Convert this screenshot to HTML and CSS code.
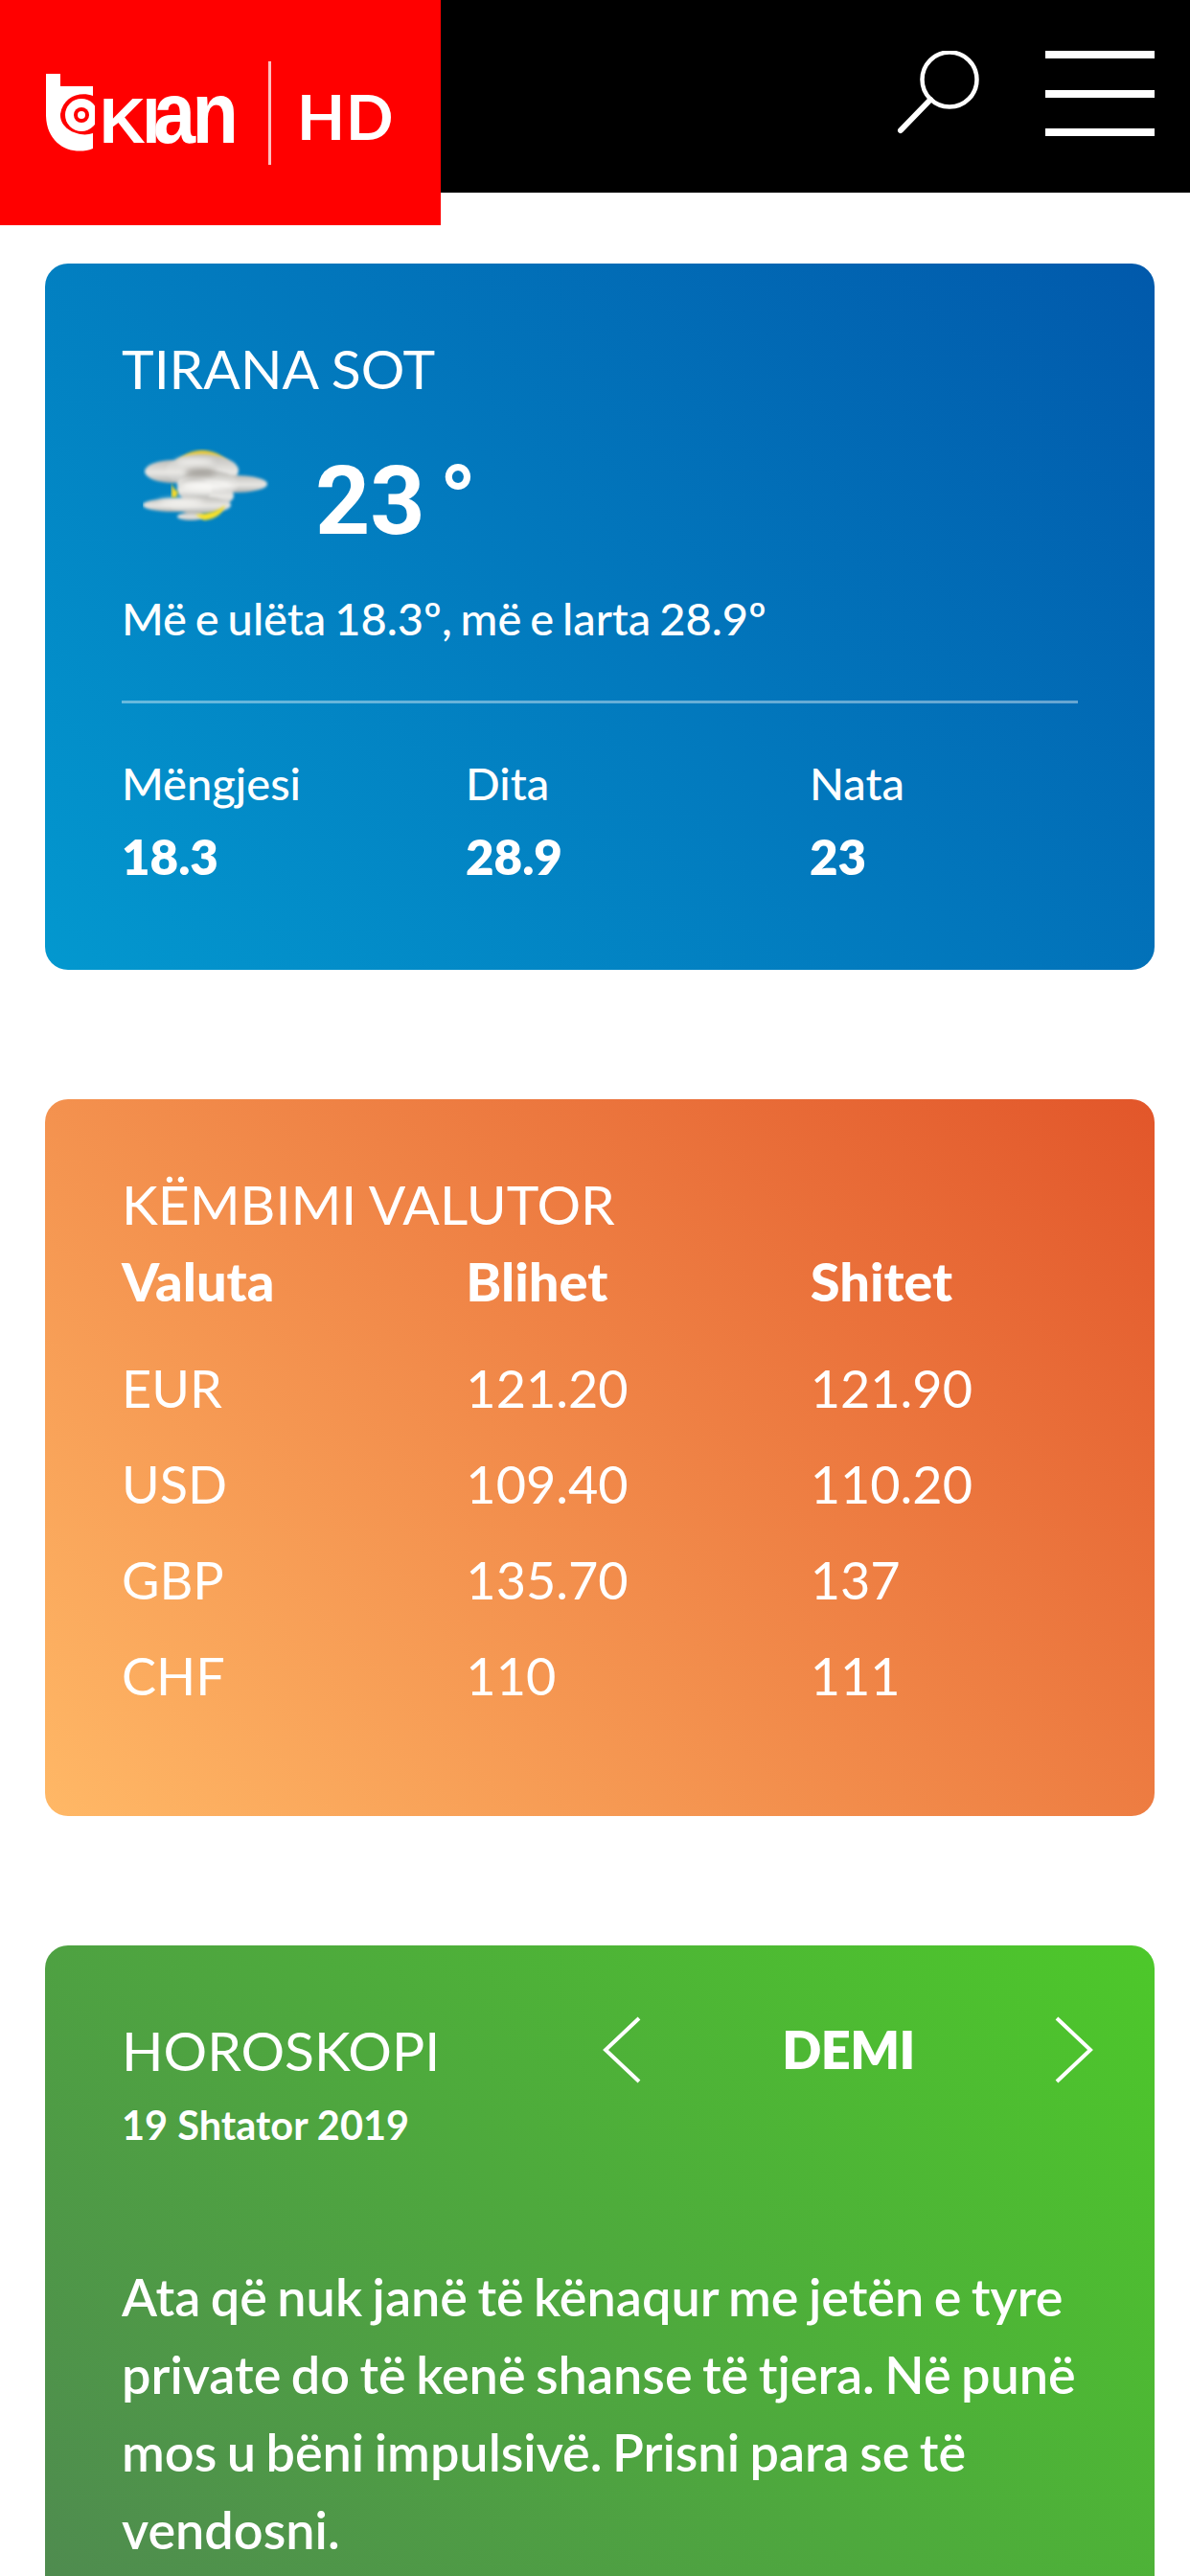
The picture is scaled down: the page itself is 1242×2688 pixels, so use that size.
FILE: index.html
```html
<!DOCTYPE html>
<html lang="sq">
<head>
<meta charset="utf-8">
<title>Top Channel</title>
<link rel="stylesheet" href="styles.css">
</head>
<body>
<header class="topbar">
  <a class="logo">
    <svg class="logo-mark" width="52" height="84" viewBox="0 0 52 84">
      <path d="M1 0H16V13H50V23C36 18 19 24 16 42C15 58 36 67 50 62V78C30 86 2 76 1 44Z" fill="#fff"/>
      <circle cx="38" cy="43" r="17" fill="#fff"/>
      <circle cx="38" cy="43" r="8" fill="#f00"/>
      <circle cx="38" cy="43" r="4" fill="#fff"/>
    </svg>
    <span class="logo-name"><span>KI</span><span class="logo-an">an</span></span>
    <span class="logo-sep"></span>
    <span class="logo-hd">HD</span>
  </a>
  <div class="top-actions">
    <svg class="icon-search" width="90" height="88" viewBox="0 0 90 88">
      <circle cx="56" cy="30" r="28.5" fill="none" stroke="#fff" stroke-width="4.5"/>
      <path d="M36 51L5 83" fill="none" stroke="#fff" stroke-width="6" stroke-linecap="round"/>
    </svg>
    <div class="burger"><span></span><span></span><span></span></div>
  </div>
</header>

<main class="cards">
  <section class="card card-weather">
    <h2 class="card-title">TIRANA SOT</h2>
    <div class="now">
      <svg class="weather-icon" width="132" height="78" viewBox="0 0 132 78">
        <defs>
          <linearGradient id="cloud" x1="0" y1="0" x2="0" y2="1">
            <stop offset="0" stop-color="#bdbcb8"/>
            <stop offset=".55" stop-color="#e9e8e5"/>
            <stop offset="1" stop-color="#aeb0ae"/>
          </linearGradient>
          <filter id="soft"><feGaussianBlur stdDeviation="1.4"/></filter>
          <filter id="softer"><feGaussianBlur stdDeviation="3"/></filter>
        </defs>
        <path d="M34 16A36 36 0 0 1 90 16Z" fill="#e9c93a" filter="url(#soft)"/>
        <g fill="url(#cloud)" filter="url(#soft)">
          <ellipse cx="32" cy="25" rx="30" ry="12"/>
          <ellipse cx="62" cy="24" rx="38" ry="17"/>
          <ellipse cx="98" cy="38" rx="32" ry="9"/>
          <ellipse cx="68" cy="38" rx="32" ry="14"/>
          <ellipse cx="68" cy="50" rx="27" ry="13"/>
          <ellipse cx="54" cy="44" rx="18" ry="12"/>
          <ellipse cx="32" cy="60" rx="32" ry="7"/>
          <ellipse cx="60" cy="60" rx="32" ry="9"/>
          <ellipse cx="50" cy="72" rx="14" ry="4"/>
        </g>
        <g filter="url(#softer)">
          <ellipse cx="60" cy="26" rx="16" ry="5" fill="#a9a6a0"/>
          <ellipse cx="66" cy="40" rx="28" ry="5" fill="#fbfaf8"/>
          <ellipse cx="54" cy="15" rx="20" ry="3.5" fill="#f2f1ee"/>
          <ellipse cx="40" cy="57" rx="24" ry="3.5" fill="#f6f5f2"/>
        </g>
        <path d="M30 37Q32 44 37 46L35 52H30Z" fill="#f4d92a" filter="url(#soft)"/>
        <path d="M55 70Q76 69 86 60Q82 74 64 76Z" fill="#f7e02c" filter="url(#soft)"/>
      </svg>
      <span class="temp">23 °</span>
    </div>
    <p class="range">Më e ulëta 18.3º, më e larta 28.9º</p>
    <div class="day-parts">
      <div class="part"><span>Mëngjesi</span><strong>18.3</strong></div>
      <div class="part"><span>Dita</span><strong>28.9</strong></div>
      <div class="part"><span>Nata</span><strong>23</strong></div>
    </div>
  </section>

  <section class="card card-rates">
    <h2 class="card-title">KËMBIMI VALUTOR</h2>
    <table class="rates">
      <thead>
        <tr><th>Valuta</th><th>Blihet</th><th>Shitet</th></tr>
      </thead>
      <tbody>
        <tr><td>EUR</td><td>121.20</td><td>121.90</td></tr>
        <tr><td>USD</td><td>109.40</td><td>110.20</td></tr>
        <tr><td>GBP</td><td>135.70</td><td>137</td></tr>
        <tr><td>CHF</td><td>110</td><td>111</td></tr>
      </tbody>
    </table>
  </section>

  <section class="card card-horo">
    <div class="horo-head">
      <div class="horo-left">
        <h2 class="card-title">HOROSKOPI</h2>
        <p class="horo-date">19 Shtator 2019</p>
      </div>
      <div class="horo-nav">
        <svg width="42" height="70" viewBox="0 0 42 70"><path d="M38 2L3 35L38 68" fill="none" stroke="#fff" stroke-width="4"/></svg>
        <span class="sign">DEMI</span>
        <svg width="42" height="70" viewBox="0 0 42 70"><path d="M4 2L39 35L4 68" fill="none" stroke="#fff" stroke-width="4"/></svg>
      </div>
    </div>
    <p class="horo-text">Ata që nuk janë të kënaqur me jetën e tyre private do të kenë shanse të tjera. Në punë mos u bëni impulsivë. Prisni para se të vendosni.</p>
  </section>
</main>
</body>
</html>
```
FILE: styles.css
```css
* { box-sizing: border-box; }
html, body { margin: 0; padding: 0; }
body {
  width: 1242px;
  height: 2688px;
  overflow: hidden;
  background: #fff;
  color: #fff;
  font-family: Lato, "Noto Sans", sans-serif;
}
.topbar {
  height: 201px;
  background: #000;
  display: flex;
  justify-content: space-between;
  align-items: flex-start;
}
.logo {
  width: 460px;
  height: 235px;
  background: #f00;
  display: flex;
  align-items: flex-start;
  padding-left: 47px;
  position: relative;
  z-index: 1;
}
.logo-mark { margin-top: 77px; flex: none; }
.logo-name {
  font-family: "Liberation Sans", sans-serif;
  font-weight: 700;
  font-size: 66px;
  line-height: 66px;
  letter-spacing: -3px;
  margin: 85px 0 0 5px;
  width: 143px;
  flex: none;
  white-space: nowrap;
}
.logo-an {
  display: inline-block;
  font-size: 90px;
  letter-spacing: -4px;
  margin-left: -4px;
  transform: scaleX(.88);
  transform-origin: left bottom;
}
.logo-sep {
  width: 3px;
  height: 108px;
  margin: 64px 0 0 33px;
  background: rgba(255,255,255,.75);
  flex: none;
}
.logo-hd {
  font-family: Lato, sans-serif;
  font-weight: 700;
  font-size: 65px;
  line-height: 64px;
  letter-spacing: 1px;
  margin: 89px 0 0 27px;
}
.top-actions {
  display: flex;
  align-items: flex-start;
  padding: 53px 37px 0 0;
}
.icon-search { margin-right: 66px; }
.burger {
  width: 114px;
  height: 89px;
  display: flex;
  flex-direction: column;
  justify-content: space-between;
}
.burger span { height: 8px; background: #fff; display: block; }

.cards {
  padding: 74px 37px 0 47px;
  display: flex;
  flex-direction: column;
  gap: 135px;
}
.card { border-radius: 24px; padding: 0 80px; }
.card-weather {
  height: 737px;
  padding-top: 76px;
  background: linear-gradient(45deg, #0398cf 0%, #0159ab 100%);
}
.card-rates {
  height: 748px;
  padding-top: 76px;
  background: linear-gradient(45deg, #ffb866 0%, #e2562a 100%);
}
.card-horo {
  height: 700px;
  padding-top: 76px;
  background: linear-gradient(45deg, #4f8a50 0%, #4dc82a 100%);
}
.card-title {
  margin: 0;
  font-weight: 400;
  font-size: 57px;
  line-height: 66px;
}
.now {
  display: flex;
  align-items: center;
  height: 120px;
  margin-top: 46px;
}
.weather-icon { margin: 0 0 34px 22px; flex: none; }
.temp {
  font-family: Roboto, sans-serif;
  font-weight: 700;
  font-size: 100px;
  line-height: 120px;
  margin-left: 48px;
  word-spacing: -10px;
}
.range {
  margin: 33px 0 0;
  font-size: 47px;
  line-height: 58px;
  font-weight: 500;
  word-spacing: -3px;
}
.day-parts {
  display: grid;
  grid-template-columns: repeat(3, 359px);
  margin-top: 57px;
  margin-right: -80px;
  padding-top: 58px;
  position: relative;
}
.day-parts::before {
  content: "";
  position: absolute;
  left: 0;
  top: 0;
  width: 998px;
  height: 3px;
  background: rgba(255,255,255,.4);
}
.part { display: flex; flex-direction: column; }
.part span { font-size: 47px; line-height: 56px; font-weight: 500; }
.part strong { font-size: 51px; line-height: 56px; font-weight: 800; margin-top: 21px; }

.rates { border-collapse: collapse; table-layout: fixed; width: 1078px; margin-top: 17px; }
.rates th, .rates td { padding: 0; text-align: left; width: 359px; }
.rates th { font-size: 56px; font-weight: 900; line-height: 62px; height: 62px; }
.rates td { font-size: 54px; line-height: 100px; height: 100px; }
.rates tbody tr:first-child td { height: 131px; padding-top: 30px; }

.horo-head {
  display: flex;
  justify-content: space-between;
  margin-right: -16px;
}
.horo-left { width: 500px; }
.horo-date { margin: 22px 0 0; font-size: 41.5px; line-height: 46px; font-weight: 700; }
.horo-nav {
  width: 512px;
  margin-top: -2px;
  height: 70px;
  display: flex;
  align-items: center;
  justify-content: space-between;
}
.sign { font-size: 54px; font-weight: 800; line-height: 70px; margin-left: 1px; letter-spacing: -.5px; }
.horo-text {
  margin: 116px -40px 0 0;
  font-size: 54px;
  line-height: 81px;
  font-weight: 600;
  word-spacing: -3px;
}
```
